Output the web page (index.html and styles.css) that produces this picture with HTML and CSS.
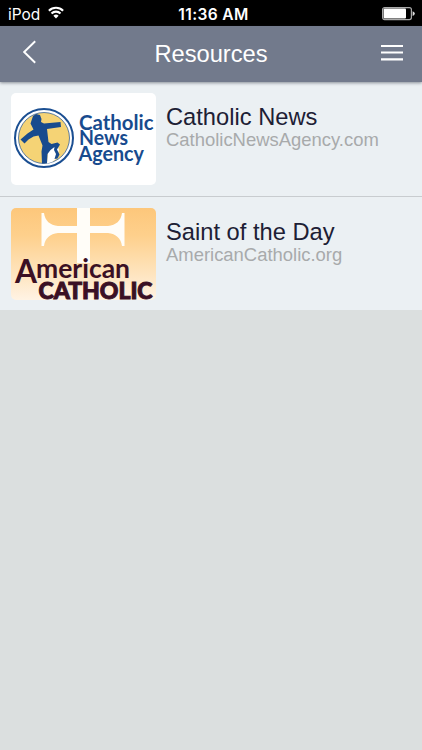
FILE: index.html
```html
<!DOCTYPE html>
<html lang="en">
<head>
<meta charset="utf-8">
<title>Resources</title>
<link rel="stylesheet" href="styles.css">
</head>
<body>
<div class="status">
  <div class="carrier"><span>iPod</span>
    <svg width="16" height="13" viewBox="0 0 16 13" fill="none" stroke="#fff" stroke-width="2.1"><path d="M.9 4.7a10 10 0 0 1 14.2 0M3.5 7.5a6.4 6.4 0 0 1 9 0"/><path d="M8 12.4 5.4 9.8a3.7 3.7 0 0 1 5.2 0z" fill="#fff" stroke="none"/></svg>
  </div>
  <span class="time">11:36 AM</span>
  <svg class="battery" width="33" height="14" viewBox="0 0 33 14"><rect x=".6" y=".6" width="28.8" height="12" rx="2" fill="#000" stroke="#aaa" stroke-width="1.2"/><rect x="1.6" y="1.6" width="22.4" height="10" rx="1" fill="#fff"/><path d="M30.6 4.2q2.2.6 2.2 2.4t-2.2 2.4z" fill="#ddd"/></svg>
</div>
<header class="nav">
  <svg class="back" width="14" height="24" viewBox="0 0 14 24"><path d="M12.2 1.2 1.2 12l11 10.8" fill="none" stroke="#fff" stroke-width="1.9"/></svg>
  <h1 class="heading">Resources</h1>
  <svg class="menu" width="22" height="18" viewBox="0 0 22 18"><path d="M0 2h22M0 8.500h22M0 15.300h22" stroke="#fff" stroke-width="2.2"/></svg>
</header>
<main class="list">
  <article class="row">
    <svg class="thumb" width="145" height="92" viewBox="0 0 145 92">
      <rect width="145" height="92" fill="#fff"/>
      <circle cx="33" cy="45" r="29" fill="#fff" stroke="#1b4f92" stroke-width="2"/>
      <circle cx="33" cy="45" r="25.500" fill="#f5d375" stroke="#1b4f92" stroke-width=".7"/>
      <path d="M36 70.500 37 59l4-5 5-3 2 6-3 9-4 3z" fill="#fff"/>
      <path d="M22 23l3-2 4 1 1.500 4-.5 3 3 1.500 16.500-1.500.5 5-14 2 1.500 13 3 2 6-1.500 2.500 2-3 5 2.500 5-2 4-3 .5 1.500-5-2-4 .5-3-4 3-3 4-.5 9-5 .5-.5-12 1-6-4-10-5 1-5 3-4 4-4-4 7-6 6-4-3-6z" fill="#184b8e"/>
      <g class="agency">
        <text x="68" y="36.500" textLength="74.5" lengthAdjust="spacingAndGlyphs">Catholic</text>
        <text x="68" y="52" textLength="49" lengthAdjust="spacingAndGlyphs">News</text>
        <text x="67.5" y="68" textLength="65.5" lengthAdjust="spacingAndGlyphs">Agency</text>
      </g>
    </svg>
    <div class="info">
      <h2 class="title">Catholic News</h2>
      <p class="site">CatholicNewsAgency.com</p>
    </div>
  </article>
  <article class="row">
    <svg class="thumb" width="145" height="92" viewBox="0 0 145 92">
      <defs><linearGradient id="glow" x2="0" y2="1"><stop offset="0" stop-color="#fdc77b"/><stop offset=".3" stop-color="#fed08c"/><stop offset=".75" stop-color="#fee6c3"/><stop offset="1" stop-color="#fff3e4"/></linearGradient></defs>
      <rect width="145" height="92" fill="url(#glow)"/>
      <path d="M66 0H79V18H97C105 17 110 13 111 5H113.500V38H111C110 30 105 26 97 25H79V55H66V25H47C39 26 34 30 33 38H30.500V5H33C34 13 39 17 47 18H66Z" fill="#fffdf8"/>
      <text class="american" x="4" y="75" font-size="33" textLength="22" lengthAdjust="spacingAndGlyphs">A</text>
      <text class="american" x="25" y="69.500" font-size="27" textLength="94" lengthAdjust="spacingAndGlyphs">merican</text>
      <text class="catholic" x="27.500" y="90.500" textLength="114" lengthAdjust="spacingAndGlyphs">CATHOLIC</text>
    </svg>
    <div class="info">
      <h2 class="title">Saint of the Day</h2>
      <p class="site">AmericanCatholic.org</p>
    </div>
  </article>
</main>
</body>
</html>
```
FILE: styles.css
```css
* { box-sizing: border-box; }
body {
  margin: 0;
  min-height: 750px;
  background: #dbdfdf;
  font-family: "Liberation Sans", Arial, sans-serif;
}
h1, h2, p { margin: 0; font-weight: 400; }
svg { display: block; }
.status {
  display: grid;
  grid-template-columns: 1fr auto 1fr;
  align-items: center;
  height: 26px;
  padding: 2px 7px 0 8px;
  background: #000;
  color: #fff;
  font-family: Inter, sans-serif;
  font-size: 15.5px;
}
.carrier { display: flex; align-items: center; gap: 8px; }
.carrier svg { margin-top: -3px; }
.time { margin-left: 4px; font-weight: 600; font-size: 15.5px; letter-spacing: .4px; }
.battery { justify-self: end; }
.nav {
  position: relative;
  display: grid;
  grid-template-columns: 1fr auto 1fr;
  align-items: center;
  height: 56px;
  padding: 0 19px 0 23px;
  background: #727a8c;
  box-shadow: 0 1px 3px rgba(40, 45, 60, .5);
  color: #fff;
}
.back { margin-top: -5px; }
.heading { margin-right: 4px; font-size: 23.7px; line-height: 28px; }
.menu { justify-self: end; margin-top: -2px; }
.row {
  display: flex;
  gap: 10px;
  height: 114px;
  padding: 11px;
  background: #ebf0f3;
}
.row + .row { border-top: 1px solid #c8cccf; padding-top: 10.500px; }
.thumb { flex: none; border-radius: 5px; }
.info { padding-top: 11px; }
.title { color: #1d2035; font-size: 23.7px; line-height: 26px; }
.site { color: #a8aaab; font-size: 18.45px; line-height: 20px; }
.agency {
  fill: #184b8e;
  font-family: Lato, sans-serif;
  font-size: 20.5px;
  font-weight: 700;
}
.american {
  fill: #3b1024;
  font-family: Lato, sans-serif;
  font-weight: 700;
}
.catholic {
  fill: #3b1024;
  font-family: Lato, sans-serif;
  font-size: 23px;
  font-weight: 900;
  stroke: #3b1024;
  stroke-width: 1px;
}
```
